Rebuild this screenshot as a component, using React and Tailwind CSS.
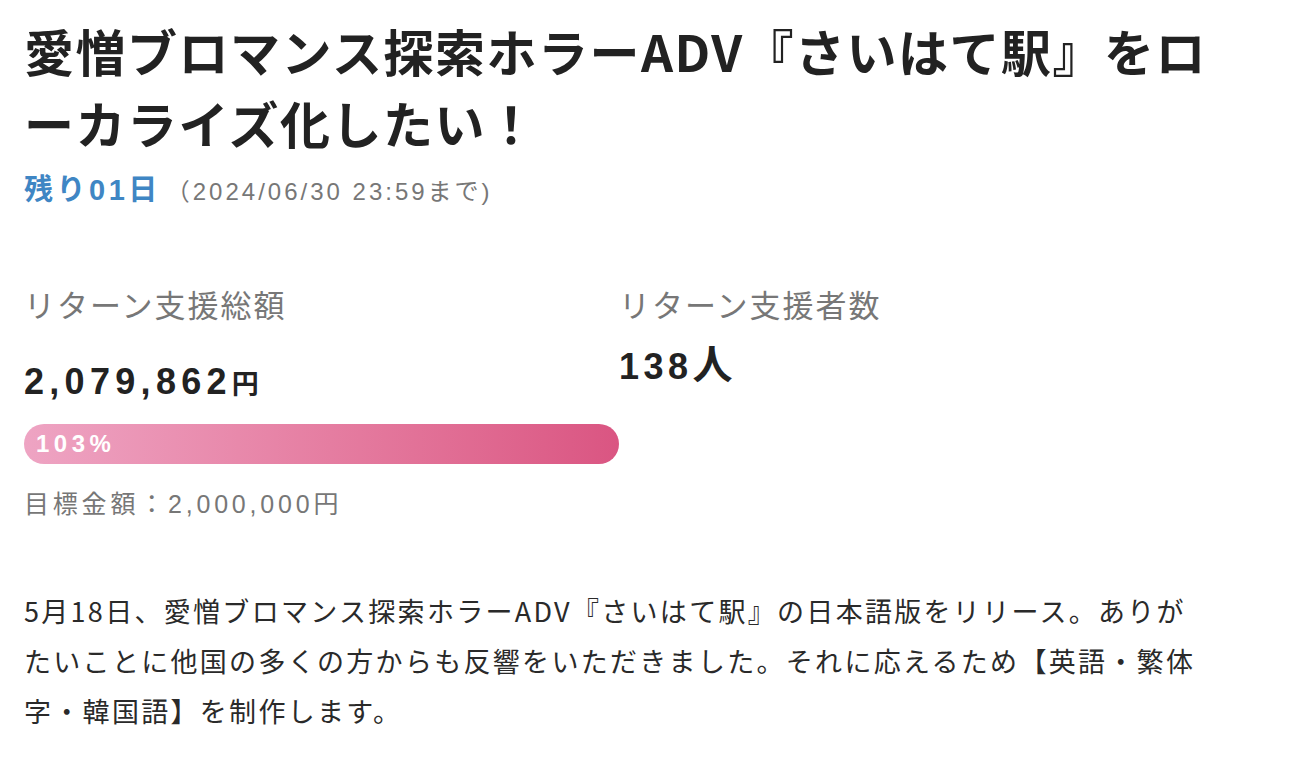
export default function App() {
  return (
    <div className="min-h-screen bg-white font-['Noto_Sans_CJK_JP','Noto_Sans',sans-serif] text-[#222]">
      <div className="w-[1214px] pl-6">
        {/* title */}
        <h1 className="pt-[14px] text-[50px] font-bold leading-[72px] tracking-[1.5px]">
          愛憎ブロマンス探索ホラーADV『さいはて駅』をローカライズ化したい！
        </h1>

        {/* remaining days */}
        <div className="mt-[12px] flex items-baseline font-['Liberation_Sans','Noto_Sans_CJK_JP',sans-serif] leading-[40px]">
          <span className="text-[29px] font-bold tracking-[3.5px] text-[#3f86c4]">残り01日</span>
          <span className="ml-[5px] text-[24px] tracking-[3px] text-[#777]">（2024/06/30 23:59まで)</span>
        </div>

        {/* stats */}
        <div className="mt-[70px] grid grid-cols-2">
          <div>
            <p className="text-[31px] leading-[44px] tracking-[2px] text-[#777]">リターン支援総額</p>
            <p className="mt-[34px] font-['Liberation_Sans','Noto_Sans_CJK_JP',sans-serif] text-[36px] font-bold leading-[44px] tracking-[5.3px]">
              2,079,862
              <span className="font-['Noto_Sans_CJK_JP',sans-serif] text-[27px] tracking-normal">円</span>
            </p>
            <div className="mt-[19px] flex h-10 w-full items-center rounded-full bg-gradient-to-r from-[#eea4c3] to-[#da5582] pl-[12px]">
              <span className="font-['Liberation_Sans',sans-serif] text-[24px] font-bold tracking-[4.5px] text-white">
                103%
              </span>
            </div>
            <p className="mt-[22px] font-['Liberation_Sans','Noto_Sans_CJK_JP',sans-serif] text-[25px] leading-[36px] tracking-[3.8px] text-[#777]">
              目標金額：2,000,000円
            </p>
          </div>
          <div>
            <p className="text-[31px] leading-[44px] tracking-[2px] text-[#777]">リターン支援者数</p>
            <p className="mt-[14px] flex items-baseline font-['Liberation_Sans','Noto_Sans_CJK_JP',sans-serif] text-[36px] font-bold leading-[44px] tracking-[4.5px]">
              138
              <span className="font-['Noto_Sans_CJK_JP',sans-serif] text-[40px] tracking-normal">人</span>
            </p>
          </div>
        </div>

        {/* description */}
        <p className="mt-[64px] w-[1180px] text-[27px] leading-[50px] tracking-[2.3px] text-[#2a2a2a]">
          5月18日、愛憎ブロマンス探索ホラーADV『さいはて駅』の日本語版をリリース。ありがたいことに他国の多くの方からも反響をいただきました。それに応えるため【英語・繁体字・韓国語】を制作します。
        </p>
      </div>
    </div>
  );
}
